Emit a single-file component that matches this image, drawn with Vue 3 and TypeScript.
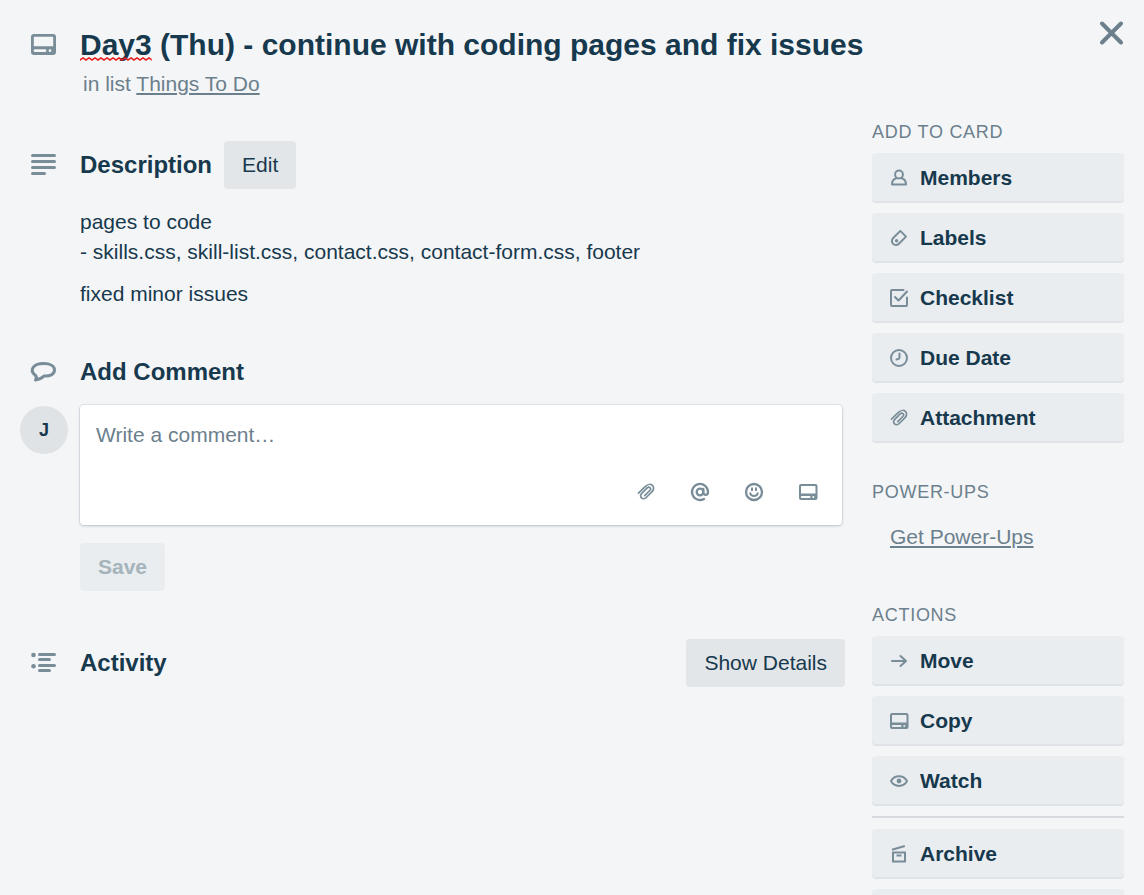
<script setup lang="ts">
import { ref } from 'vue'

interface SideAction {
  label: string
  icon: string
}

const addToCard: SideAction[] = [
  { label: 'Members', icon: 'member' },
  { label: 'Labels', icon: 'label' },
  { label: 'Checklist', icon: 'check' },
  { label: 'Due Date', icon: 'clock' },
  { label: 'Attachment', icon: 'clip' },
]
const actions: SideAction[] = [
  { label: 'Move', icon: 'arrow' },
  { label: 'Copy', icon: 'card' },
  { label: 'Watch', icon: 'eye' },
]
const tools: SideAction[] = [
  { label: 'Add an attachment', icon: 'clip' },
  { label: 'Mention a member', icon: 'at' },
  { label: 'Add emoji', icon: 'smile' },
  { label: 'Add card', icon: 'card' },
]
const comment = ref('')
</script>

<template>
  <svg class="sprite" aria-hidden="true">
    <defs>
      <symbol id="card" viewBox="0 0 24 24">
        <path fill="currentColor" fill-rule="evenodd" d="M5 4H19.500a2 2 0 0 1 2 2V18a2 2 0 0 1-2 2H5a2 2 0 0 1-2-2V6a2 2 0 0 1 2-2ZM5.500 6a.5 .5 0 0 0-.5 .5V13.500H19.500V6.500a.5 .5 0 0 0-.5-.5ZM5.800 16a.9 .9 0 0 0 0 2H13.500a.9 .9 0 0 0 0-2ZM17.300 16a1 1 0 1 0 0 2a1 1 0 0 0 0-2Z" />
      </symbol>
      <symbol id="card-lg" viewBox="0 0 36 36">
        <path fill="currentColor" fill-rule="evenodd" d="M8 7H27a3 3 0 0 1 3 3V25a3 3 0 0 1-3 3H8a3 3 0 0 1-3-3V10a3 3 0 0 1 3-3ZM8.500 9.700a.7 .7 0 0 0-.7 .7V19.300H27.200V10.400a.7 .7 0 0 0-.7-.7ZM9 22.300a1.300 1.300 0 0 0 0 2.700H19a1.300 1.300 0 0 0 0-2.700ZM24 22.300a1.350 1.350 0 1 0 0 2.700a1.350 1.350 0 0 0 0-2.700Z" />
      </symbol>
      <symbol id="lines" viewBox="0 0 36 36">
        <path class="s3" d="M6.500 8.500H28.500M6.500 14.500H28.500M6.500 20.500H28.500M6.500 26.500H18.500" />
      </symbol>
      <symbol id="bubble" viewBox="0 0 36 36">
        <path class="s3" d="M9.500 26C10.500 24.500 10.800 22.500 9 21C3.500 16.500 6.500 9.500 17.500 9.500C25 9.500 28.500 12.500 28.500 16C28.500 20.500 23.500 22.500 18 22C15.500 24.500 13 25.500 9.500 26Z" />
      </symbol>
      <symbol id="activity" viewBox="0 0 36 36">
        <path class="s3" d="M13.500 9.500H28.500M13.500 14.500H23.500M13.500 20.500H28.500M13.500 25.500H23.500" />
        <circle cx="7.500" cy="10" r="2.300" fill="currentColor" />
        <circle cx="7.500" cy="21.300" r="2.300" fill="currentColor" />
      </symbol>
      <symbol id="close" viewBox="0 0 36 36">
        <path d="M8 8.500L27 27.500M27 8.500L8 27.500" fill="none" stroke="currentColor" stroke-width="4" stroke-linecap="round" />
      </symbol>
      <symbol id="member" viewBox="0 0 24 24">
        <path class="s2" d="M9.300 12.200C6.500 13 5 15 5 18.500H19C19 15 17.500 13 14.700 12.200" />
        <circle class="s2" cx="12" cy="8.500" r="3.900" />
      </symbol>
      <symbol id="label" viewBox="0 0 24 24">
        <path class="s2" d="M13.300 4.900L19 10.600L11.600 18C9.900 19.700 7.600 19.300 6.200 17.900C4.600 16.300 4.400 13.900 6 12.300Z" />
        <circle cx="9.600" cy="14.700" r="1.700" fill="currentColor" />
      </symbol>
      <symbol id="check" viewBox="0 0 24 24">
        <path class="s2" d="M16.500 4H5A1 1 0 0 0 4 5V19A1 1 0 0 0 5 20H19A1 1 0 0 0 20 19V11.500M8 11L11.500 14.500L20 5.500" />
      </symbol>
      <symbol id="clock" viewBox="0 0 24 24">
        <circle class="s2" cx="12" cy="12" r="8" />
        <path class="s2" d="M12.500 7.500V11.500Q12.500 13 9.500 13.500" />
      </symbol>
      <symbol id="clip" viewBox="0 0 24 24">
        <path class="s17" d="M4.500 13.200L10.900 6.800C14.300 3.400 17.400 4.400 18.600 5.600C19.900 6.900 20.200 9.500 17.800 11.900L12.200 17.500C10.500 19.200 8.600 19 7.500 17.900C6.300 16.700 6.200 14.900 7.800 13.300L13.200 7.900C14.200 6.900 15.400 7.100 16 7.700C16.700 8.400 16.800 9.500 15.800 10.500L10.700 15.600" />
      </symbol>
      <symbol id="at" viewBox="0 0 24 24">
        <circle class="s23" cx="12" cy="12" r="3.300" />
        <path class="s23" d="M15.300 8.800V12.500C15.300 15.500 20 15.800 20 12A8 8 0 1 0 16 18.900" />
      </symbol>
      <symbol id="smile" viewBox="0 0 24 24">
        <circle class="s23" cx="12" cy="12" r="8" />
        <path class="s2" d="M10 8.300V10.200M14 8.300V10.200M8.200 13.300C9 16.800 15 16.800 15.800 13.300" />
      </symbol>
      <symbol id="arrow" viewBox="0 0 24 24">
        <path class="s2" d="M5 12H19M13.500 7L19 12L13.500 17" />
      </symbol>
      <symbol id="eye" viewBox="0 0 24 24">
        <path class="s2" d="M4 12C7.500 5.500 16.500 5.500 20 12C16.500 18.500 7.500 18.500 4 12Z" />
        <circle cx="12" cy="12" r="2.400" fill="currentColor" />
      </symbol>
      <symbol id="archive" viewBox="0 0 24 24">
        <path d="M5 7.700L17.800 4" fill="none" stroke="currentColor" stroke-width="2" />
        <path d="M6 10.500H18V19.500H6Z M9.500 13.500H14.500" fill="none" stroke="currentColor" stroke-width="2" />
      </symbol>
    </defs>
  </svg>

  <div class="dialog" role="dialog" aria-labelledby="card-title">
    <header class="head">
      <svg class="icon-lg" aria-hidden="true"><use href="#card-lg" /></svg>
      <div class="heading">
        <h1 id="card-title">
          <span class="typo">Day3<svg class="wave" aria-hidden="true">
            <defs>
              <pattern id="zigzag" width="6" height="4" patternUnits="userSpaceOnUse">
                <path d="M-1 2L0 3L3 1L6 3L7 2" fill="none" stroke="#e81c1c" stroke-width="1.500" />
              </pattern>
            </defs>
            <rect width="100%" height="4" fill="url(#zigzag)" />
          </svg></span> (Thu) - continue with coding pages and fix issues
        </h1>
        <p class="in-list">in list <a href="#">Things To Do</a></p>
      </div>
      <button class="close" type="button" aria-label="Close">
        <svg aria-hidden="true"><use href="#close" /></svg>
      </button>
    </header>

    <div class="columns">
      <main class="main">
        <section class="description">
          <div class="row">
            <svg class="icon-lg" aria-hidden="true"><use href="#lines" /></svg>
            <h2>Description</h2>
            <button class="btn" type="button">Edit</button>
          </div>
          <div class="prose">
            <p>pages to code<br />- skills.css, skill-list.css, contact.css, contact-form.css, footer</p>
            <p>fixed minor issues</p>
          </div>
        </section>

        <section class="comment">
          <div class="row">
            <svg class="icon-lg" aria-hidden="true"><use href="#bubble" /></svg>
            <h2>Add Comment</h2>
          </div>
          <div class="comment-row">
            <span class="avatar">J</span>
            <form class="comment-form" @submit.prevent>
              <div class="box">
                <textarea v-model="comment" rows="1" aria-label="Write a comment" placeholder="Write a comment…"></textarea>
                <div class="tools">
                  <button v-for="t in tools" :key="t.label" type="button" :aria-label="t.label">
                    <svg class="icon" aria-hidden="true"><use :href="'#' + t.icon" /></svg>
                  </button>
                </div>
              </div>
              <button class="save" type="submit" :disabled="!comment">Save</button>
            </form>
          </div>
        </section>

        <section class="row activity">
          <svg class="icon-lg" aria-hidden="true"><use href="#activity" /></svg>
          <h2>Activity</h2>
          <button class="btn end" type="button">Show Details</button>
        </section>
      </main>

      <aside class="side">
        <section>
          <h3>Add to card</h3>
          <div class="stack">
            <button v-for="a in addToCard" :key="a.label" class="side-btn" type="button">
              <svg class="icon" aria-hidden="true"><use :href="'#' + a.icon" /></svg>{{ a.label }}
            </button>
          </div>
        </section>
        <section class="power">
          <h3>Power-Ups</h3>
          <a class="power-link" href="#">Get Power-Ups</a>
        </section>
        <section>
          <h3>Actions</h3>
          <div class="stack">
            <button v-for="a in actions" :key="a.label" class="side-btn" type="button">
              <svg class="icon" aria-hidden="true"><use :href="'#' + a.icon" /></svg>{{ a.label }}
            </button>
            <hr />
            <button class="side-btn" type="button">
              <svg class="icon" aria-hidden="true"><use href="#archive" /></svg>Archive
            </button>
            <button class="side-btn" type="button" aria-label="More actions"></button>
          </div>
        </section>
      </aside>
    </div>
  </div>
</template>

<style>
body {
  margin: 0;
  background: #f4f5f7;
}
</style>

<style scoped>
.sprite {
  position: absolute;
  width: 0;
  height: 0;
}
.s17,
.s2,
.s23,
.s3 {
  fill: none;
  stroke: currentColor;
  stroke-linecap: round;
  stroke-linejoin: round;
}
.s17 { stroke-width: 1.7; }
.s2 { stroke-width: 2; }
.s23 { stroke-width: 2.3; }
.s3 { stroke-width: 3; }

.dialog {
  box-sizing: border-box;
  height: 100vh;
  overflow: hidden;
  padding: 27px 20px 0;
  background: #f4f5f7;
  color: #17394d;
  font: 21px/30px "Liberation Sans", Arial, sans-serif;
}
button,
textarea {
  font: inherit;
  color: inherit;
  border: 0;
  margin: 0;
}
button {
  cursor: pointer;
}
h1,
h2,
h3,
p {
  margin: 0;
}
a {
  color: inherit;
  text-decoration: underline;
}
.icon-lg {
  flex: none;
  width: 36px;
  height: 36px;
  margin: 0 18px 0 6px;
  color: #798d99;
}
.icon {
  flex: none;
  width: 24px;
  height: 24px;
  color: #798d99;
}

.head {
  display: flex;
  align-items: flex-start;
}
.heading {
  flex: 1;
}
h1 {
  font-size: 30px;
  line-height: 36px;
}
.typo {
  position: relative;
}
.wave {
  position: absolute;
  left: 0;
  bottom: 0;
  width: 100%;
  height: 4px;
}
.in-list {
  margin: 6px 0 0 3px;
  color: #6b808c;
}
.close {
  display: flex;
  margin: -12px -6px 0 0;
  padding: 0;
  background: none;
  color: #6b808c;
}
.close svg {
  width: 36px;
  height: 36px;
}

.columns {
  display: grid;
  grid-template-columns: minmax(0, 1fr) 252px;
  gap: 27px;
  margin-top: 18px;
}
.main {
  padding-top: 24px;
}
.row {
  display: flex;
  align-items: center;
  min-height: 48px;
}
h2 {
  font-size: 24px;
  line-height: 30px;
}
.btn {
  height: 48px;
  margin-left: 12px;
  padding: 0 18px;
  border-radius: 4px;
  background: #e2e6e9;
}
.btn.end {
  margin-left: auto;
}
.prose {
  padding: 18px 0 0 60px;
}
.prose p + p {
  margin-top: 12px;
}
.comment {
  margin-top: 39px;
}
.comment-row {
  display: flex;
  align-items: flex-start;
  gap: 12px;
  padding: 9px 3px 0 0;
}
.avatar {
  flex: none;
  width: 48px;
  height: 48px;
  margin-top: 1px;
  border-radius: 50%;
  background: #dfe3e6;
  font-size: 18px;
  font-weight: 700;
  line-height: 48px;
  text-align: center;
}
.comment-form {
  flex: 1;
}
.box {
  box-sizing: border-box;
  height: 120px;
  padding: 15px 16px;
  border-radius: 4px;
  background: #fff;
  box-shadow: 0 1px 3px rgba(9, 30, 66, 0.2), 0 0 0 1px rgba(9, 30, 66, 0.06);
}
textarea {
  display: block;
  box-sizing: border-box;
  width: 100%;
  height: 30px;
  padding: 0;
  background: none;
  outline: 0;
  resize: none;
  overflow: hidden;
}
textarea::placeholder {
  color: #6b808c;
  opacity: 1;
}
.tools {
  display: flex;
  justify-content: flex-end;
  gap: 30px;
  margin: 30px 6px 0 0;
}
.tools button {
  display: flex;
  padding: 0;
  background: none;
}
.save {
  height: 48px;
  margin-top: 18px;
  padding: 0 18px;
  border-radius: 4px;
  background: #e9edf0;
  font-weight: 700;
}
.save:disabled {
  color: #a5b3bb;
  cursor: default;
}
.activity {
  margin-top: 48px;
}

h3 {
  color: #6b808c;
  font-size: 18px;
  font-weight: 400;
  letter-spacing: 0.04em;
  line-height: 30px;
  text-transform: uppercase;
}
.stack {
  display: grid;
  gap: 11px;
  margin-top: 6px;
}
.side-btn {
  display: flex;
  align-items: center;
  gap: 9px;
  height: 49px;
  padding: 1px 15px 0;
  border-radius: 4px;
  background: #eaedf0;
  box-shadow: inset 0 -1px 0 #dfe3e7, 0 1px 0 #dfe3e7;
  font-weight: 700;
}
.power {
  margin: 35px 0 39px;
}
.power-link {
  display: block;
  margin-top: 6px;
  padding: 9px 18px;
  color: #6b808c;
}
hr {
  width: 100%;
  height: 2px;
  margin: 0;
  border: 0;
  background: #d6dadf;
}
</style>
